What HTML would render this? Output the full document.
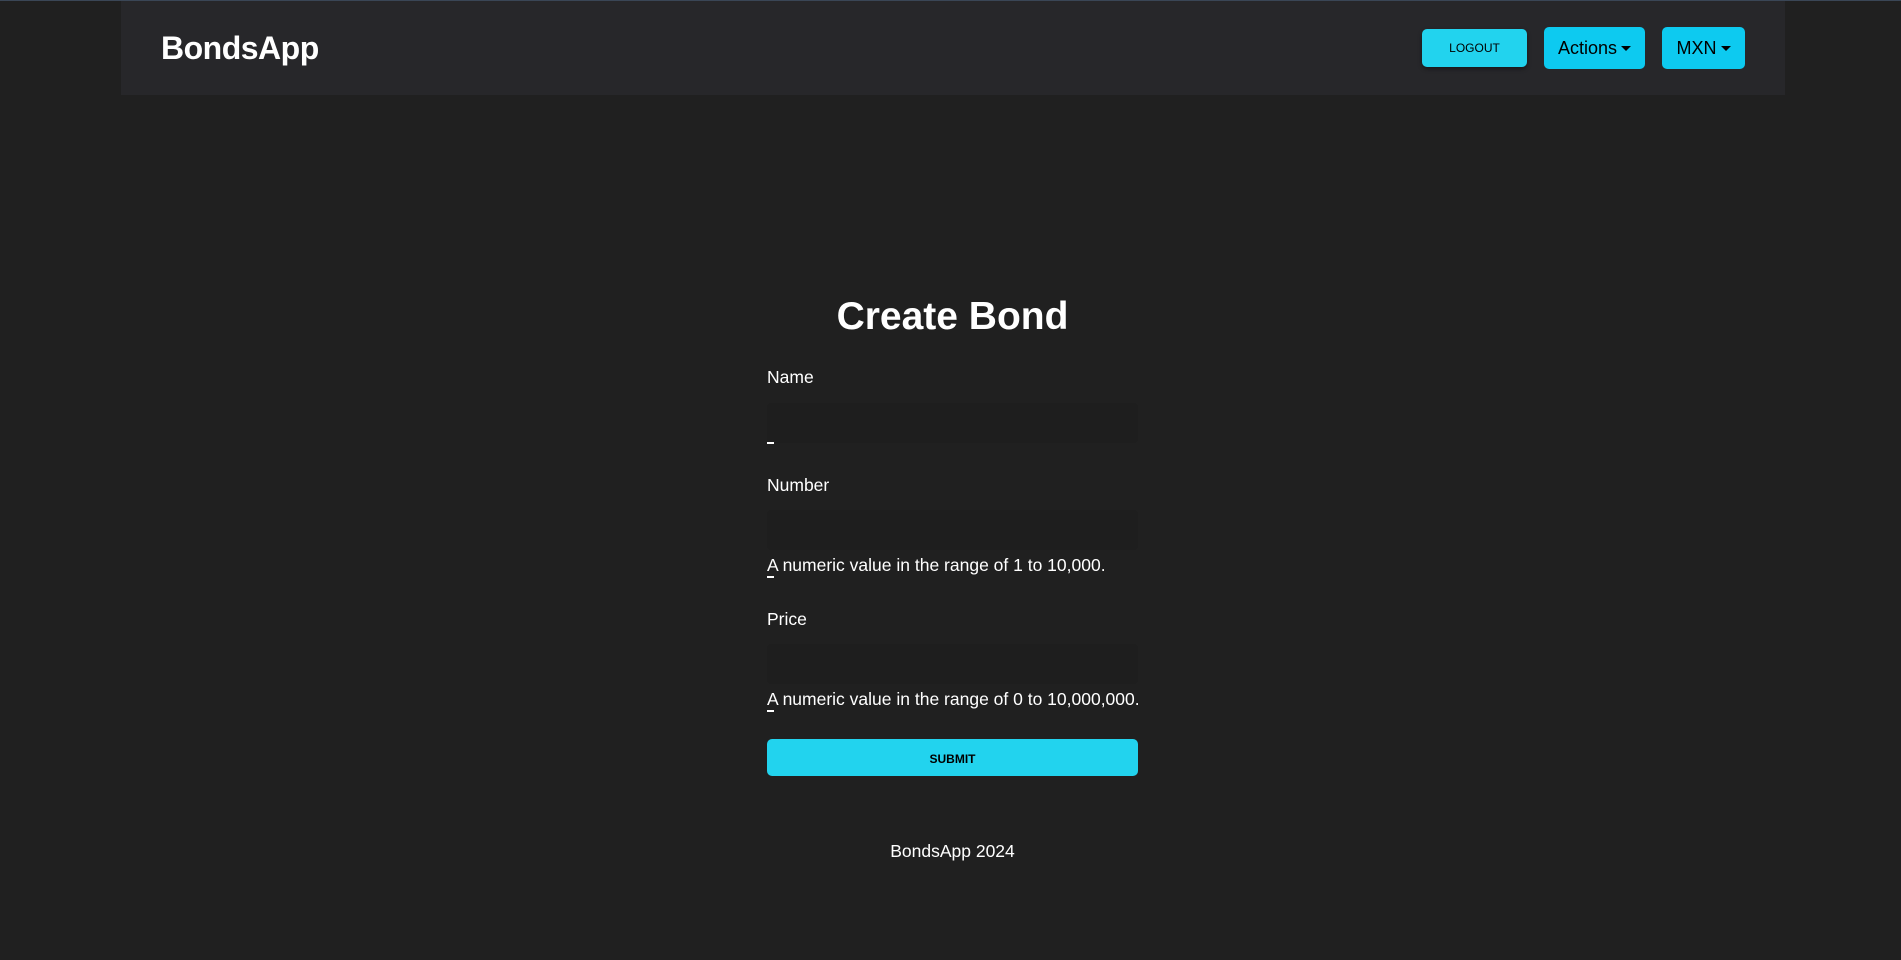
<!DOCTYPE html>
<html><head><style>
body{margin:0;background:#202020;width:1901px;height:960px;overflow:hidden;font-family:"Liberation Sans",sans-serif;color:#fff;position:relative}
.top{position:absolute;left:0;top:0;width:1901px;height:1px;background:#3a4656}
.nav{position:absolute;left:121px;top:1px;width:1664px;height:94px;background:#27272a}
.brand{position:absolute;left:161px;top:30px;font-size:32px;font-weight:bold;letter-spacing:-0.5px}
.btn{position:absolute;background:#22d3ee;color:#000;border-radius:5px;display:flex;align-items:center;justify-content:center}
.car{display:inline-block;width:0;height:0;border-left:5px solid transparent;border-right:5px solid transparent;border-top:5px solid #000;margin-left:4px}
.t{position:absolute;font-size:17.5px}
.in{position:absolute;left:767px;width:371px;height:40px;background:#1e1e1e;border-radius:4px}
.d{position:absolute;left:767px;width:7px;height:2px;background:#fff}
</style></head><body>
<div class="top"></div>
<div class="nav"></div>
<div class="brand">BondsApp</div>
<div class="btn" style="left:1422px;top:29px;width:105px;height:38px;font-size:12px;box-shadow:0 2px 4px rgba(0,0,0,.4)">LOGOUT</div>
<div class="btn" style="left:1544px;top:27px;width:101px;height:42px;font-size:18px;background:#0dcaf0">Actions<span class="car"></span></div>
<div class="btn" style="left:1662px;top:27px;width:83px;height:42px;font-size:18px;background:#0dcaf0">MXN<span class="car"></span></div>
<div style="position:absolute;left:0;width:1901px;top:295px;text-align:center;font-size:39px;font-weight:bold;margin-left:2px">Create Bond</div>
<div class="t" style="left:767px;top:367px">Name</div>
<div class="in" style="top:403px"></div>
<div class="d" style="top:442px"></div>
<div class="t" style="left:767px;top:475px">Number</div>
<div class="in" style="top:510px"></div>
<div class="t" style="left:767px;top:555px">A numeric value in the range of 1 to 10,000.</div>
<div class="d" style="top:576px"></div>
<div class="t" style="left:767px;top:609px">Price</div>
<div class="in" style="top:644px"></div>
<div class="t" style="left:767px;top:689px">A numeric value in the range of 0 to 10,000,000.</div>
<div class="d" style="top:710px"></div>
<div class="btn" style="left:767px;top:739px;width:371px;height:37px;font-size:12px;font-weight:bold;padding-top:2px;box-sizing:border-box">SUBMIT</div>
<div style="position:absolute;left:0;width:1901px;top:841px;text-align:center;font-size:17.5px;margin-left:2px">BondsApp 2024</div>
</body></html>
